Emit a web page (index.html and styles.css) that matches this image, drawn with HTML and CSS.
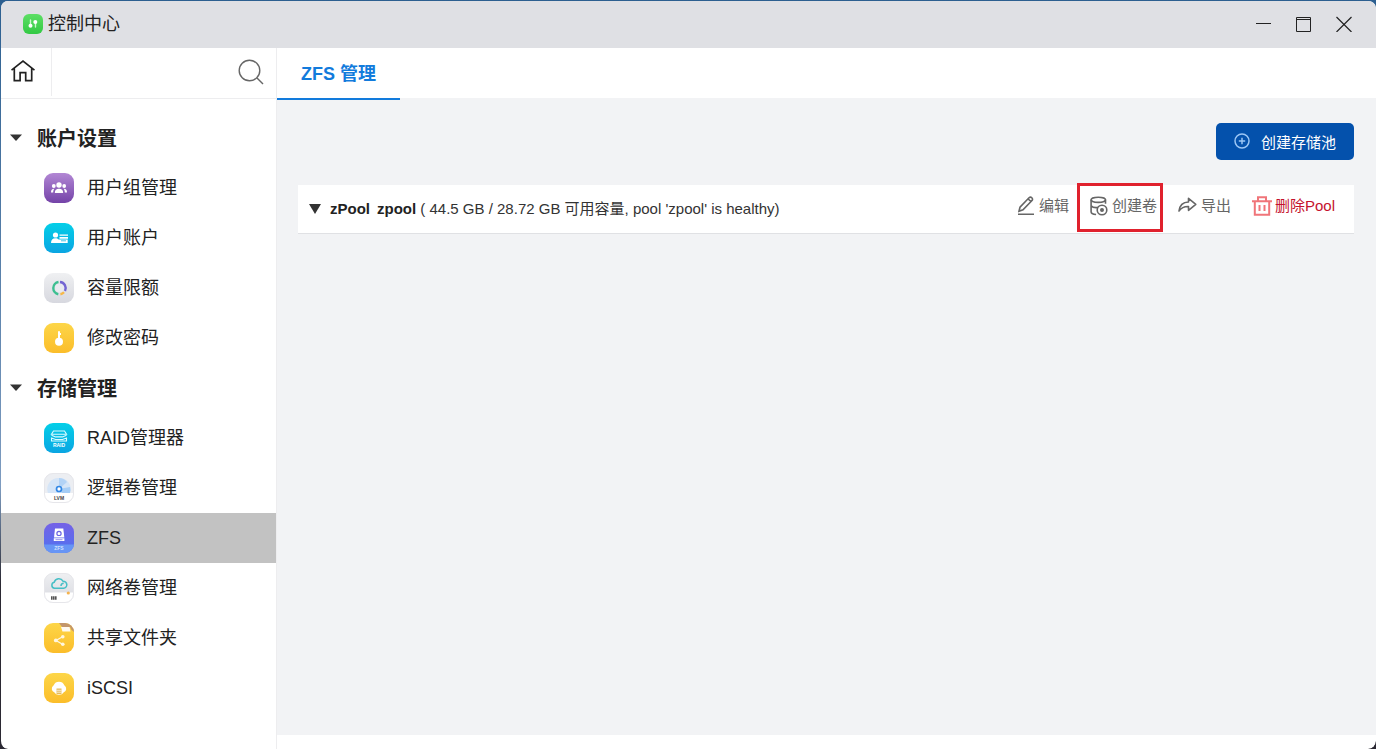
FILE: index.html
```html
<!DOCTYPE html>
<html lang="zh-CN">
<head>
<meta charset="utf-8">
<meta name="viewport" content="width=device-width, initial-scale=1">
<title>控制中心</title>
<link rel="stylesheet" href="styles.css">
</head>
<body>
<svg class="defs" width="0" height="0" aria-hidden="true">
  <defs>
    <linearGradient id="purple" x2="0" y2="1"><stop stop-color="#b287d4"/><stop offset="1" stop-color="#7443a8"/></linearGradient>
    <linearGradient id="cyan" x2="0" y2="1"><stop stop-color="#04cfe8"/><stop offset="1" stop-color="#0aa5e2"/></linearGradient>
    <linearGradient id="silver" x2="0" y2="1"><stop stop-color="#eff0f2"/><stop offset="1" stop-color="#d7d8df"/></linearGradient>
    <linearGradient id="gold" x2="0" y2="1"><stop stop-color="#fdd648"/><stop offset="1" stop-color="#fbbd2a"/></linearGradient>
    <linearGradient id="violet" x2="0" y2="1"><stop stop-color="#7562e6"/><stop offset="1" stop-color="#4f72f0"/></linearGradient>
    <linearGradient id="green" x2="0" y2="1"><stop stop-color="#5ddf65"/><stop offset="1" stop-color="#32c944"/></linearGradient>
    <clipPath id="tile"><rect width="30" height="30" rx="9"/></clipPath>
  </defs>
</svg>
<div class="window">
  <header class="titlebar">
    <svg class="app-icon" width="20" height="20" viewBox="0 0 20 20" aria-hidden="true"><rect width="20" height="20" rx="6" fill="url(#green)"/><path d="M7.5 6v6M12.5 8v5" stroke="#c9f7cb" stroke-width="1.4" stroke-linecap="round"/><circle cx="7.5" cy="11.7" r="2" fill="#fff"/><circle cx="12.3" cy="8" r="2" fill="#fff"/></svg>
    <h1 class="title">控制中心</h1>
    <div class="window-controls">
      <button class="plain" aria-label="最小化"><svg width="16" height="16" viewBox="0 0 16 16"><path d="M0 7.5h15" stroke="#222"/></svg></button>
      <button class="plain" aria-label="最大化"><svg width="16" height="16" viewBox="0 0 16 16" fill="none" stroke="#222"><path d="M.5 1.5h14v14H.5zM.5 3.5h14"/></svg></button>
      <button class="plain" aria-label="关闭"><svg width="16" height="16" viewBox="0 0 16 16"><path d="M.5 1l15 15M15.5 1l-15 15" stroke="#222" stroke-width="1.2"/></svg></button>
    </div>
  </header>
  <div class="body">
    <aside class="sidebar">
      <div class="search-row">
        <button class="plain home" aria-label="主页"><svg width="24" height="22" viewBox="0 0 24 22" fill="none" stroke="#222" stroke-width="1.7"><path d="M.5 10.2L12 1.2l11.5 9M3.3 8.5v12.2h5.8v-8h5.6v8h6V8.5"/></svg></button>
        <input class="search-input" type="text" aria-label="搜索">
        <button class="plain search-button" aria-label="搜索"><svg width="26" height="26" viewBox="0 0 26 26" fill="none" stroke="#666" stroke-width="1.4"><circle cx="11.5" cy="11.5" r="10.3"/><path d="M19 19l6 6"/></svg></button>
      </div>
      <nav class="menu">
        <button class="plain group"><svg width="12" height="7" viewBox="0 0 12 7"><path d="M0 .5h12L6 7z" fill="#333"/></svg>账户设置</button>
        <a class="item" href="#"><svg class="tile" viewBox="0 0 30 30"><rect width="30" height="30" rx="9" fill="url(#purple)"/><g fill="#fff"><circle cx="15" cy="12" r="2.7"/><circle cx="9.8" cy="13" r="1.9"/><circle cx="20.2" cy="13" r="1.9"/><path d="M10.8 20c0-3 1.6-4.2 4.2-4.2s4.2 1.2 4.2 4.2zM7 19.5c0-2.6 1-3.8 3.4-3.7-.9 1-1.2 2.2-1.2 3.7zM23 19.5c0-2.6-1-3.8-3.4-3.7.9 1 1.2 2.2 1.2 3.7z"/></g></svg>用户组管理</a>
        <a class="item" href="#"><svg class="tile" viewBox="0 0 30 30"><rect width="30" height="30" rx="9" fill="url(#cyan)"/><g fill="#fff"><circle cx="11.5" cy="12" r="2.6"/><path d="M7 20c0-3 1.5-4.8 4.5-4.8 1.5 0 2.2.5 3.2 1.3h9V20zM15.5 11.5H24v1.3h-8.5zM15.5 14H24v1.7h-8.5z"/></g><path d="M17 17.8h5" stroke="#46c4e8"/></svg>用户账户</a>
        <a class="item" href="#"><svg class="tile" viewBox="0 0 30 30"><rect width="30" height="30" rx="9" fill="url(#silver)"/><circle cx="15.5" cy="15" r="4.5" fill="#e9eaf0"/><g fill="none" stroke-width="2.4"><path d="M14.5 9a6.2 6.2 0 0 0-.2 12.2" stroke="#3cbf91"/><path d="M16 9a6.2 6.2 0 0 1 5 9" stroke="#7465d2"/><path d="M20 19.2a6 6 0 0 1-3.6 2" stroke="#f7b847"/></g></svg>容量限额</a>
        <a class="item" href="#"><svg class="tile" viewBox="0 0 30 30"><rect width="30" height="30" rx="9" fill="url(#gold)"/><circle cx="15" cy="18.7" r="4" fill="#fff"/><path d="M14 8.5q1-1 2 0V16h-2zM16 10h1v2h-1z" fill="#fff"/></svg>修改密码</a>
        <button class="plain group"><svg width="12" height="7" viewBox="0 0 12 7"><path d="M0 .5h12L6 7z" fill="#333"/></svg>存储管理</button>
        <a class="item" href="#"><svg class="tile" viewBox="0 0 30 30"><rect width="30" height="30" rx="9" fill="url(#cyan)"/><g fill="none" stroke="#d9fbff" stroke-width="1.1"><path d="M9.5 8h11l2 3.2h-15zM7.5 12.2l4 1.7h7l4-1.7M7.5 15v3h15v-3l-4 1.5h-7z"/></g><text class="tile-label" x="15" y="23.5" fill="#fff">RAID</text></svg>RAID管理器</a>
        <a class="item" href="#"><svg class="tile" viewBox="0 0 30 30"><g clip-path="url(#tile)"><rect width="30" height="30" fill="#eceef2"/><path d="M4 20A11 11 0 0 1 15 5a11 11 0 0 1 11 15z" fill="#d5e5f7"/><path d="M15 5a11 11 0 0 1 8 4l-8 7z" fill="#b2d3f6"/><path d="M15 16L26 14a11 11 0 0 1 0 6H18z" fill="#a5cdf6"/><path d="M0 20h30v10H0z" fill="#fff"/></g><circle cx="15" cy="16" r="2.5" fill="#fff" stroke="#3388e5" stroke-width="1.7"/><text class="tile-label" x="15" y="27" fill="#444">LVM</text><rect x=".5" y=".5" width="29" height="29" rx="8.5" fill="none" stroke="#e6e6ea"/></svg>逻辑卷管理</a>
        <a class="item active" href="#" aria-current="page"><svg class="tile" viewBox="0 0 30 30"><g clip-path="url(#tile)"><rect width="30" height="30" fill="url(#violet)"/><path d="M0 21.5h30V30H0z" fill="#6795f5"/></g><path d="M11 5.5h8.3l1 9H10z" fill="#fff"/><path d="M9.8 15.3h10.6v2.7H9.8z" fill="#fff"/><circle cx="15" cy="10.4" r="2.1" fill="none" stroke="#6a63e2" stroke-width="1.2"/><path d="M11.5 16.7h7" stroke="#6a63e2" stroke-width=".7"/><text class="tile-label" x="15" y="27" fill="#cfe0ff">ZFS</text></svg>ZFS</a>
        <a class="item" href="#"><svg class="tile" viewBox="0 0 30 30"><g clip-path="url(#tile)"><rect width="30" height="30" fill="url(#silver)"/><path d="M0 19.5h30V30H0z" fill="#fff"/></g><path d="M10.5 15.2a3 3 0 0 1-.3-5.9 4.8 4.8 0 0 1 8.8-1.1 3.5 3.5 0 1 1 .6 7zM17 13q0-2.7 2.7-2.8" fill="none" stroke="#47bfc6" stroke-width="1.5"/><circle cx="24.3" cy="20" r="1.6" fill="#f5b34e"/><path d="M7 25h6" stroke="#555" stroke-width="3.5" stroke-dasharray="1.6 .4"/><rect x=".5" y=".5" width="29" height="29" rx="8.5" fill="none" stroke="#e6e6ea"/></svg>网络卷管理</a>
        <a class="item" href="#"><svg class="tile" viewBox="0 0 30 30"><g clip-path="url(#tile)"><rect width="30" height="30" fill="url(#gold)"/><path d="M15 0h15v9l-2.5-2-1.5-3h-8z" fill="#c3966c"/><path d="M17 4h8.5l1 4.5h-8z" fill="#fffaf0"/></g><path d="M19 13.5l-7 4 7 4" fill="none" stroke="#fff6df" stroke-width="1.3"/><g fill="#fff6df"><circle cx="18.8" cy="13.8" r="1.8"/><circle cx="11.8" cy="17.4" r="1.9"/><circle cx="18.8" cy="21.2" r="1.8"/></g></svg>共享文件夹</a>
        <a class="item" href="#"><svg class="tile" viewBox="0 0 30 30"><rect width="30" height="30" rx="9" fill="url(#gold)"/><path d="M10.5 19.5a4 4 0 0 1-.8-7.2 5.8 5.8 0 0 1 10.6 0 4 4 0 0 1-.8 7.2q-1 2.3-4.5 2.3t-4.5-2.3z" fill="#fff"/><path d="M12.5 15.5h5v5.5h-5z" fill="#e5bb5d"/><path d="M12.5 17.3h5M12.5 19.2h5" stroke="#fff" stroke-width=".7"/></svg>iSCSI</a>
      </nav>
    </aside>
    <main class="main">
      <div class="tabs" role="tablist"><button class="plain tab" role="tab" aria-selected="true">ZFS 管理</button></div>
      <section class="content">
        <div class="toolbar">
          <button class="create"><svg width="16" height="16" viewBox="0 0 16 16" fill="none" stroke="#9cc6f5" stroke-width="1.5"><circle cx="8" cy="8" r="7"/><path d="M8 4.8v6.4M4.8 8h6.4"/></svg>创建存储池</button>
        </div>
        <article class="pool">
          <button class="plain toggle" aria-label="展开 zpool"><svg width="12" height="10" viewBox="0 0 12 10"><path d="M0 0h12L6 10z" fill="#333"/></svg></button>
          <p class="summary"><strong class="kind">zPool</strong><strong>zpool</strong> ( 44.5 GB / 28.72 GB 可用容量, pool 'zpool' is healthy)</p>
          <div class="actions">
            <button class="plain action"><svg width="18" height="20" viewBox="0 0 18 20" fill="none" stroke="#666" stroke-width="1.6"><path d="M1 18.2h16M2 15.2l1-4L12 1.8q1.5-1.3 2.8 0t.2 2.8l-9 9.2zM11.5 3.2l2.3 2.3"/></svg>编辑</button>
            <button class="plain action marked"><svg width="18" height="20" viewBox="0 0 18 20" fill="none" stroke="#666" stroke-width="1.6"><ellipse cx="8.3" cy="3.8" rx="7.2" ry="2.6"/><path d="M1.1 3.8v12c0 1.5 2 2.5 5 2.7M15.5 3.8v4M1.1 9.7q2 2.5 7 1.8"/><circle cx="12" cy="14" r="4.8"/><circle cx="12" cy="14" r="1.2" fill="#666"/></svg>创建卷</button>
            <button class="plain action"><svg width="19" height="20" viewBox="0 0 19 20" fill="none" stroke="#666" stroke-width="1.6" stroke-linejoin="round"><path d="M1 15q1-8.7 9.5-9V2.3l7.3 6-7.3 6v-3.8Q4.5 10.2 1 15z"/></svg>导出</button>
            <button class="plain action danger"><svg width="20" height="20" viewBox="0 0 20 20" fill="none" stroke="#f0757a" stroke-width="2"><path d="M0 5.2h20M6 5V1.3h8V5M2.8 5.2v13.5h14.4V5.2M7.5 9v6M12.5 9v6"/></svg>删除Pool</button>
          </div>
        </article>
      </section>
    </main>
  </div>
</div>
</body>
</html>
```
FILE: styles.css
```css
* { box-sizing: border-box; }

body {
  margin: 0;
  background: linear-gradient(#2c5f90, #7e9cc0 65%, #2b2933 78%);
  color: #222;
  font-family: "Liberation Sans", "Noto Sans CJK SC", sans-serif;
}

svg { display: block; flex: none; }
.defs { position: absolute; }

.plain {
  padding: 0;
  border: 0;
  background: none;
  color: inherit;
  font: inherit;
  cursor: pointer;
}

.window {
  display: flex;
  flex-direction: column;
  height: 100vh;
  border: solid transparent;
  border-width: 1px 0 0 1px;
  border-radius: 8px;
  overflow: hidden;
  background: #fff padding-box;
}

.titlebar {
  display: flex;
  align-items: center;
  gap: 5px;
  height: 47px;
  padding: 0 24px 2px 22px;
  background: #dfe0e4;
}

.title {
  flex: 1;
  margin: 0;
  font-size: 18px;
  font-weight: 400;
  line-height: 24px;
}

.window-controls { display: flex; gap: 24px; }

.body { display: flex; flex: 1; min-height: 0; }

.sidebar {
  width: 276px;
  flex: none;
  border-right: 1px solid #ededef;
}

.search-row {
  display: flex;
  align-items: center;
  height: 51px;
  padding-bottom: 2px;
  border-bottom: 1px solid #ededef;
}

.home {
  display: flex;
  align-items: center;
  height: 100%;
  padding: 0 16px 2px 10px;
  border-right: 1px solid #ededef;
}

.search-input {
  flex: 1;
  min-width: 0;
  padding: 0 10px;
  border: 0;
  outline: 0;
  font: inherit;
}

.search-button { margin-right: 12px; }

.menu { padding-top: 14px; }

.group {
  display: flex;
  align-items: center;
  gap: 15px;
  width: 100%;
  height: 50px;
  padding: 0 0 1px 9px;
  font-size: 20px;
  font-weight: 700;
}

.item {
  display: flex;
  align-items: center;
  gap: 13px;
  height: 50px;
  padding-left: 43px;
  color: inherit;
  font-size: 18px;
  line-height: 26px;
  text-decoration: none;
}

.item.active { background: #c2c2c2; }

.tile { width: 30px; height: 30px; }

.tile-label {
  font-size: 5px;
  font-weight: 700;
  text-anchor: middle;
}

.main {
  display: flex;
  flex: 1;
  flex-direction: column;
  min-width: 0;
  padding-bottom: 14px;
}

.tabs { display: flex; height: 50px; }

.tab {
  position: relative;
  flex: none;
  height: 52px;
  padding: 0 24px 2px;
  border-bottom: 2px solid #127bdc;
  color: #127bdc;
  font-size: 18px;
  font-weight: 700;
}

.content {
  flex: 1;
  padding: 25px 22px 0 21px;
  background: #f2f3f5;
}

.toolbar {
  display: flex;
  justify-content: flex-end;
  margin-bottom: 25px;
}

.create {
  display: flex;
  align-items: center;
  gap: 11px;
  height: 37px;
  padding: 0 18px 1px;
  border: 0;
  border-radius: 5px;
  background: #0451ac;
  color: #fff;
  font: inherit;
  font-size: 15px;
  cursor: pointer;
}

.pool {
  display: flex;
  align-items: center;
  height: 49px;
  padding: 0 19px 0 11px;
  border-bottom: 1px solid #e0e1e4;
  background: #fff;
}

.toggle { margin-right: 9px; }

.summary {
  flex: 1;
  margin: 0;
  color: #333;
  font-size: 15px;
  line-height: 22px;
}

.summary strong { color: #222; }
.kind { margin-right: 7px; }

.actions {
  display: flex;
  gap: 21px;
  padding-bottom: 6px;
}

.action {
  position: relative;
  display: flex;
  align-items: center;
  gap: 4px;
  color: #666;
  font-size: 15px;
  line-height: 22px;
}

.danger {
  gap: 3px;
  color: #c5122d;
}

/* Frame that calls out the create-volume action */
.marked::after {
  position: absolute;
  inset: -12px -6px -15px -13px;
  border: 3px solid #e0212d;
  content: "";
}
```
